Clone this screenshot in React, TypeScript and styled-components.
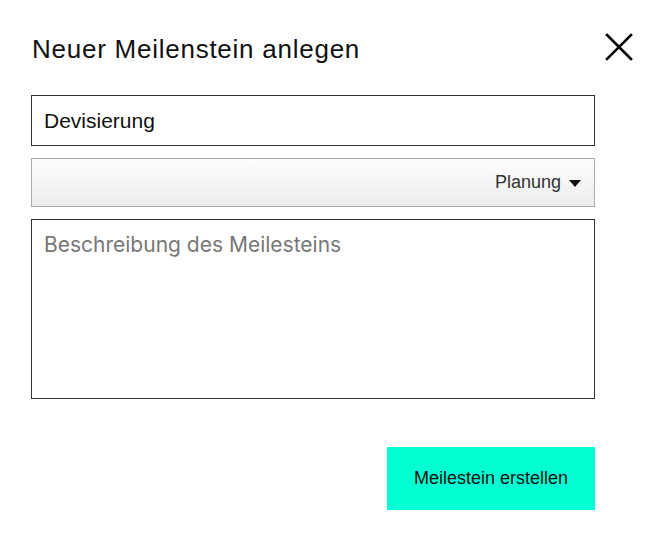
import React from "react";
import styled, { createGlobalStyle } from "styled-components";

const Global = createGlobalStyle`
  html, body { margin: 0; padding: 0; background: #fff; }
  body { font-family: "Liberation Sans", Arial, sans-serif; }
  * { box-sizing: border-box; }
`;

const Dialog = styled.div`
  width: 667px;
  height: 533px;
  padding: 30px 72px 0 31px;
  display: flex;
  flex-direction: column;
  position: relative;
`;

const Header = styled.div`
  display: flex;
  align-items: center;
  justify-content: space-between;
  height: 38px;
  margin-bottom: 27px;
`;

const Title = styled.h1`
  margin: 0;
  font-family: "Liberation Sans", Arial, sans-serif;
  font-weight: 400;
  font-size: 26px;
  letter-spacing: 0.75px;
  color: #111;
  padding-left: 1px;
`;

const CloseButton = styled.button`
  position: absolute;
  top: 33px;
  right: 34px;
  width: 28px;
  height: 28px;
  padding: 0;
  border: none;
  background: transparent;
  cursor: pointer;
  display: flex;
  align-items: center;
  justify-content: center;
`;

const Form = styled.form`
  display: flex;
  flex-direction: column;
  gap: 12px;
  width: 564px;
`;

const TextInput = styled.input`
  height: 51px;
  width: 100%;
  border: 1px solid #333;
  padding: 0 12px;
  font-family: "Liberation Sans", Arial, sans-serif;
  font-size: 21px;
  color: #111;
  outline: none;
`;

const Select = styled.div`
  height: 49px;
  width: 100%;
  border: 1px solid #aaa;
  background: linear-gradient(to bottom, #fdfdfd, #ececec);
  display: flex;
  align-items: center;
  justify-content: flex-end;
  gap: 8px;
  padding: 0 13px 0 12px;
  font-family: "Liberation Sans", Arial, sans-serif;
  font-size: 18px;
  color: #333;
`;

const Caret = styled.span`
  width: 0;
  height: 0;
  border-left: 6px solid transparent;
  border-right: 6px solid transparent;
  border-top: 7px solid #111;
  margin-top: 2px;
`;

const TextArea = styled.textarea`
  height: 180px;
  width: 100%;
  border: 1px solid #333;
  padding: 12px 12px;
  font-family: Inter, "Noto Sans", sans-serif;
  font-size: 21px;
  resize: none;
  outline: none;
  &::placeholder { color: #777; }
`;

const Footer = styled.div`
  display: flex;
  justify-content: flex-end;
  margin-top: 36px;
`;

const PrimaryButton = styled.button`
  width: 208px;
  height: 63px;
  border: none;
  background: #00ffd2;
  font-family: "Liberation Sans", Arial, sans-serif;
  font-size: 18px;
  color: #111;
  cursor: pointer;
`;

export default function App() {
  return (
    <>
      <Global />
      <Dialog>
        <Header>
          <Title>Neuer Meilenstein anlegen</Title>
        </Header>
        <CloseButton aria-label="Schließen">
          <svg width="28" height="28" viewBox="0 0 28 28">
            <path d="M2 2 L26 26 M26 2 L2 26" stroke="#000" strokeWidth="2.6" strokeLinecap="square" />
          </svg>
        </CloseButton>
        <Form>
          <TextInput defaultValue="Devisierung" />
          <Select>
            <span>Planung</span>
            <Caret />
          </Select>
          <TextArea placeholder="Beschreibung des Meilesteins" />
          <Footer>
            <PrimaryButton type="button">Meilestein erstellen</PrimaryButton>
          </Footer>
        </Form>
      </Dialog>
    </>
  );
}
